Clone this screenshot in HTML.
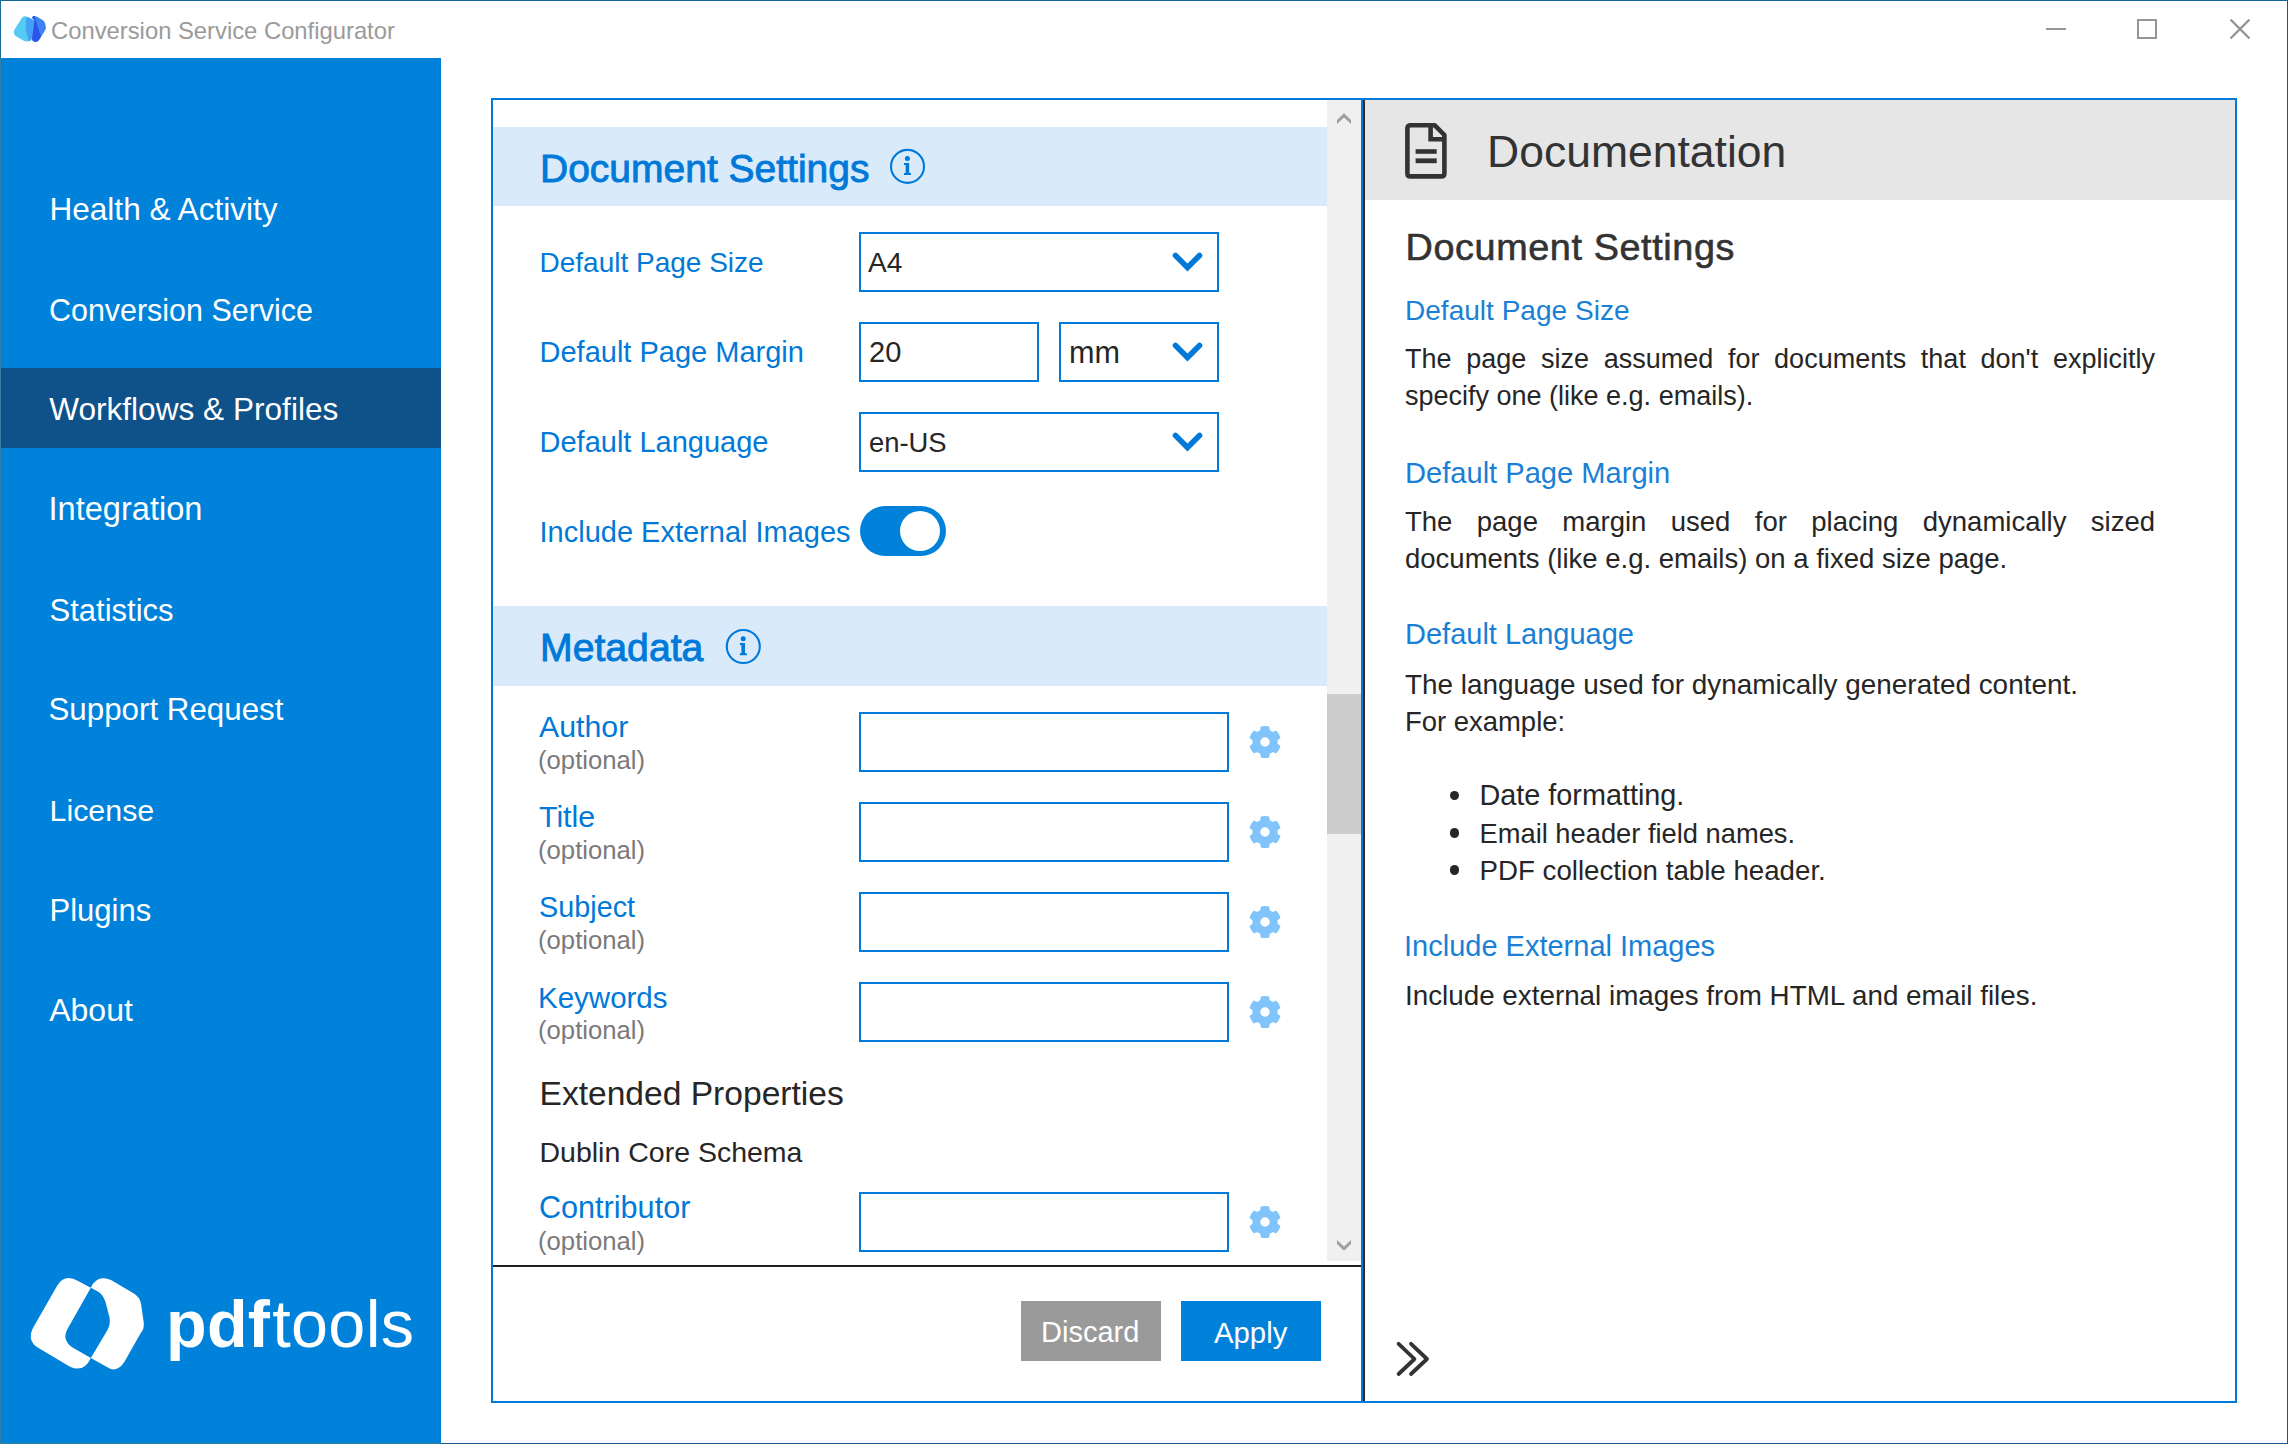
<!DOCTYPE html>
<html><head><meta charset="utf-8"><title>Conversion Service Configurator</title>
<style>
html,body{margin:0;padding:0;width:2288px;height:1444px;overflow:hidden;background:#fff;}
body{position:relative;font-family:"Liberation Sans", sans-serif;}
.a{position:absolute;}
.t{position:absolute;white-space:nowrap;line-height:1;font-family:"Liberation Sans", sans-serif;}
</style></head><body>
<svg class="a" style="left:12px;top:14px;" width="36" height="30" viewBox="0 0 36 30">
<path d="M9.98,3.82 Q11.60,1.30 14.33,2.55 L20.68,5.47 Q22.50,6.30 22.23,8.28 L20.07,23.82 Q19.80,25.80 17.98,26.63 L17.15,27.00 Q14.50,28.20 11.88,26.74 L5.22,23.06 Q2.60,21.60 1.90,19.55 L1.90,19.55 Q1.20,17.50 2.82,14.98 Z" fill="#56CBF2"/>
<path d="M14.41,3.60 Q14.50,2.60 15.41,3.02 L20.68,5.46 Q22.50,6.30 22.23,8.28 L20.07,23.82 Q19.80,25.80 18.15,26.65 L18.15,26.65 Q16.50,27.50 16.07,25.55 L13.72,14.98 Q13.50,14.00 13.59,13.00 Z" fill="#43A2F6"/>
<path d="M21.05,2.40 Q22.30,1.30 24.92,2.77 L30.18,5.73 Q32.80,7.20 33.37,10.15 L33.82,12.54 Q34.20,14.50 33.14,16.20 L27.88,24.65 Q26.30,27.20 24.45,27.70 L24.45,27.70 Q22.60,28.20 21.20,27.00 L20.56,26.45 Q19.80,25.80 19.94,24.81 L22.36,7.29 Q22.50,6.30 21.81,5.58 L20.49,4.22 Q19.80,3.50 20.55,2.84 Z" fill="#3E82F4"/>
<path d="M20.55,2.84 Q19.80,3.50 20.49,4.22 L21.81,5.58 Q22.50,6.30 22.36,7.29 L19.94,24.81 Q19.80,25.80 20.56,26.45 L21.20,27.00 Q22.60,28.20 24.45,27.70 L24.45,27.70 Q26.30,27.20 27.30,25.47 L28.50,23.37 Q29.00,22.50 28.68,21.55 L25.12,10.95 Q24.80,10.00 24.52,9.04 L22.58,2.26 Q22.30,1.30 21.55,1.96 Z" fill="#2A55E8"/>
</svg>
<div class="t" style="left:51px;top:19.45px;font-size:23.8px;color:#9A9A9A;">Conversion Service Configurator</div>
<div class="a" style="left:2046px;top:28px;width:20px;height:2px;background:#969696;"></div>
<div class="a" style="left:2137px;top:19px;width:20px;height:20px;border:2px solid #969696;box-sizing:border-box;"></div>
<svg class="a" style="left:2229px;top:18px;" width="22" height="22" viewBox="0 0 22 22"><path d="M1.6,1.6 L20.4,20.4 M20.4,1.6 L1.6,20.4" stroke="#969696" stroke-width="2.2"/></svg>
<div class="a" style="left:1px;top:58px;width:440px;height:1385px;background:#0082DB;"></div>
<div class="a" style="left:1px;top:368px;width:440px;height:80px;background:#0F5189;"></div>
<div class="t" style="left:49.4px;top:194.05px;font-size:31.6px;color:#FFFFFF;">Health &amp; Activity</div>
<div class="t" style="left:49px;top:295.02px;font-size:30.45px;color:#FFFFFF;">Conversion Service</div>
<div class="t" style="left:49.2px;top:394.05px;font-size:31.6px;color:#FFFFFF;">Workflows &amp; Profiles</div>
<div class="t" style="left:48.5px;top:493.20px;font-size:32.6px;color:#FFFFFF;">Integration</div>
<div class="t" style="left:49.5px;top:594.56px;font-size:31px;color:#FFFFFF;">Statistics</div>
<div class="t" style="left:48.5px;top:694.30px;font-size:31.3px;color:#FFFFFF;">Support Request</div>
<div class="t" style="left:49.5px;top:795.07px;font-size:30.4px;color:#FFFFFF;">License</div>
<div class="t" style="left:49.5px;top:894.56px;font-size:31px;color:#FFFFFF;">Plugins</div>
<div class="t" style="left:49.2px;top:993.71px;font-size:32px;color:#FFFFFF;">About</div>
<svg class="a" style="left:25px;top:1270px;" width="125" height="105" viewBox="0 0 125 105">
<path d="M32,16 Q39.2,3.4 53.1,10.9 L65.8,17.8 L42.9,58.2 Q36,70 48,77.8 L65.8,88 Q59,103 45,96.7 L13.1,77.8 Q1,70 8.7,56.7 Z" fill="#fff"/>
<path d="M65.8,17.8 Q72,4 86.5,10.2 L108.4,23.3 Q115,27 116,34 L118.5,50.9 Q120,58 115.6,63.3 L99.6,91.6 Q92,104 81.5,96.7 L65.8,88 L82.2,60.4 Q86,54 84.4,47 L80.5,32 Q78,24 72,21 Z" fill="#fff"/>
</svg>
<div class="t" style="left:166px;top:1290.71px;font-size:66.5px;color:#FFFFFF;letter-spacing:0.3px;"><b>pdf</b><span style="margin-left:2px">tools</span></div>
<div class="a" style="left:491px;top:98px;width:872px;height:1305px;border:2px solid #0079D8;box-sizing:border-box;"></div>
<div class="a" style="left:493px;top:127px;width:834px;height:79px;background:#D9EBFB;"></div>
<div class="a" style="left:493px;top:606px;width:834px;height:80px;background:#D9EBFB;"></div>
<div class="a" style="left:1327px;top:100px;width:34px;height:1161px;background:#F0F0F0;"></div>
<div class="a" style="left:1327px;top:694px;width:34px;height:140px;background:#CDCDCD;"></div>
<svg class="a" style="left:1336px;top:111px;" width="16" height="15" viewBox="0 0 16 15"><path d="M1,9 L8,2.3 L15,9 L15,13 L8,6.4 L1,13 Z" fill="#A0A0A0"/></svg>
<svg class="a" style="left:1336px;top:1238px;" width="16" height="15" viewBox="0 0 16 15"><path d="M1,2 L8,8.6 L15,2 L15,6 L8,12.8 L1,6 Z" fill="#A0A0A0"/></svg>
<div class="a" style="left:493px;top:1265px;width:868px;height:2px;background:#1E1E1E;"></div>
<div class="a" style="left:1363px;top:98px;width:2px;height:1305px;background:#2A2A2A;"></div>
<div class="t" style="left:540px;top:149.19px;font-size:39px;color:#0079D8;-webkit-text-stroke:0.9px #0079D8;">Document Settings</div>
<svg class="a" style="left:888px;top:147px;" width="38" height="38" viewBox="0 0 38 38">
<circle cx="19.50" cy="19.40" r="16.5" fill="none" stroke="#0079D8" stroke-width="2.1"/>
<circle cx="19.40" cy="11.60" r="2.5" fill="#0079D8"/>
<path transform="translate(0.50,0.40)" d="M15.5,15.5 H20.7 V25.7 H22.5 V27.7 H15.5 V25.7 H17.1 V17.5 H15.5 Z" fill="#0079D8"/>
</svg>
<div class="t" style="left:540px;top:628.42px;font-size:39.2px;color:#0079D8;-webkit-text-stroke:0.9px #0079D8;">Metadata</div>
<svg class="a" style="left:724px;top:627px;" width="38" height="38" viewBox="0 0 38 38">
<circle cx="19.30" cy="19.50" r="16.5" fill="none" stroke="#0079D8" stroke-width="2.1"/>
<circle cx="19.20" cy="11.70" r="2.5" fill="#0079D8"/>
<path transform="translate(0.30,0.50)" d="M15.5,15.5 H20.7 V25.7 H22.5 V27.7 H15.5 V25.7 H17.1 V17.5 H15.5 Z" fill="#0079D8"/>
</svg>
<div class="t" style="left:539.5px;top:248.60px;font-size:28px;color:#0079D8;">Default Page Size</div>
<div class="t" style="left:539.5px;top:338.25px;font-size:29px;color:#0079D8;">Default Page Margin</div>
<div class="t" style="left:539.5px;top:427.75px;font-size:29px;color:#0079D8;">Default Language</div>
<div class="t" style="left:539.5px;top:518.25px;font-size:29px;color:#0079D8;">Include External Images</div>
<div class="a" style="left:859px;top:232px;width:360px;height:60px;background:#fff;border:2px solid #0079D8;box-sizing:border-box;"></div>
<svg class="a" style="left:1170.5px;top:250px;" width="34" height="24" viewBox="0 0 34 24"><path d="M4.5,5.5 L16.5,17.5 L28.5,5.5" fill="none" stroke="#0079D8" stroke-width="5.6" stroke-linecap="round" stroke-linejoin="miter"/></svg>
<div class="t" style="left:868px;top:248.60px;font-size:28px;color:#262626;">A4</div>
<div class="a" style="left:859px;top:322px;width:180px;height:60px;background:#fff;border:2px solid #0079D8;box-sizing:border-box;"></div>
<div class="t" style="left:869px;top:338.25px;font-size:29px;color:#262626;">20</div>
<div class="a" style="left:1059px;top:322px;width:160px;height:60px;background:#fff;border:2px solid #0079D8;box-sizing:border-box;"></div>
<svg class="a" style="left:1170.5px;top:340px;" width="34" height="24" viewBox="0 0 34 24"><path d="M4.5,5.5 L16.5,17.5 L28.5,5.5" fill="none" stroke="#0079D8" stroke-width="5.6" stroke-linecap="round" stroke-linejoin="miter"/></svg>
<div class="t" style="left:1069px;top:336.90px;font-size:30.6px;color:#262626;">mm</div>
<div class="a" style="left:859px;top:412px;width:360px;height:60px;background:#fff;border:2px solid #0079D8;box-sizing:border-box;"></div>
<svg class="a" style="left:1170.5px;top:430px;" width="34" height="24" viewBox="0 0 34 24"><path d="M4.5,5.5 L16.5,17.5 L28.5,5.5" fill="none" stroke="#0079D8" stroke-width="5.6" stroke-linecap="round" stroke-linejoin="miter"/></svg>
<div class="t" style="left:869px;top:429.11px;font-size:27.4px;color:#262626;">en-US</div>
<div class="a" style="left:860px;top:506px;width:86px;height:50px;background:#0082DB;border-radius:25px;"></div>
<div class="a" style="left:900px;top:511px;width:40px;height:40px;background:#fff;border-radius:50%;"></div>
<div class="t" style="left:539px;top:711.85px;font-size:30.3px;color:#0079D8;">Author</div>
<div class="t" style="left:538px;top:748.04px;font-size:25.7px;color:#7A7A7A;">(optional)</div>
<div class="a" style="left:859px;top:712px;width:370px;height:60px;background:#fff;border:2px solid #0079D8;box-sizing:border-box;"></div>
<svg class="a" style="left:1247.4px;top:724px;" width="36" height="36" viewBox="0 0 36 36"><path d="M22.72,6.32 L22.28,2.58 A16.0,16.0 0 0,0 13.72,2.58 L13.28,6.32 A12.6,12.6 0 0,0 10.24,8.07 L6.79,6.59 A16.0,16.0 0 0,0 2.51,13.99 L5.52,16.25 A12.6,12.6 0 0,0 5.52,19.75 L2.51,22.01 A16.0,16.0 0 0,0 6.79,29.41 L10.24,27.93 A12.6,12.6 0 0,0 13.28,29.68 L13.72,33.42 A16.0,16.0 0 0,0 22.28,33.42 L22.72,29.68 A12.6,12.6 0 0,0 25.76,27.93 L29.21,29.41 A16.0,16.0 0 0,0 33.49,22.01 L30.48,19.75 A12.6,12.6 0 0,0 30.48,16.25 L33.49,13.99 A16.0,16.0 0 0,0 29.21,6.59 L25.76,8.07 A12.6,12.6 0 0,0 22.72,6.32 Z M18,13.25 A4.75,4.75 0 1,0 18,22.75 A4.75,4.75 0 1,0 18,13.25 Z" fill="#80C4FB" fill-rule="evenodd"/></svg>
<div class="t" style="left:539px;top:801.85px;font-size:30.3px;color:#0079D8;">Title</div>
<div class="t" style="left:538px;top:838.04px;font-size:25.7px;color:#7A7A7A;">(optional)</div>
<div class="a" style="left:859px;top:802px;width:370px;height:60px;background:#fff;border:2px solid #0079D8;box-sizing:border-box;"></div>
<svg class="a" style="left:1247.4px;top:814px;" width="36" height="36" viewBox="0 0 36 36"><path d="M22.72,6.32 L22.28,2.58 A16.0,16.0 0 0,0 13.72,2.58 L13.28,6.32 A12.6,12.6 0 0,0 10.24,8.07 L6.79,6.59 A16.0,16.0 0 0,0 2.51,13.99 L5.52,16.25 A12.6,12.6 0 0,0 5.52,19.75 L2.51,22.01 A16.0,16.0 0 0,0 6.79,29.41 L10.24,27.93 A12.6,12.6 0 0,0 13.28,29.68 L13.72,33.42 A16.0,16.0 0 0,0 22.28,33.42 L22.72,29.68 A12.6,12.6 0 0,0 25.76,27.93 L29.21,29.41 A16.0,16.0 0 0,0 33.49,22.01 L30.48,19.75 A12.6,12.6 0 0,0 30.48,16.25 L33.49,13.99 A16.0,16.0 0 0,0 29.21,6.59 L25.76,8.07 A12.6,12.6 0 0,0 22.72,6.32 Z M18,13.25 A4.75,4.75 0 1,0 18,22.75 A4.75,4.75 0 1,0 18,13.25 Z" fill="#80C4FB" fill-rule="evenodd"/></svg>
<div class="t" style="left:539px;top:893.12px;font-size:28.8px;color:#0079D8;">Subject</div>
<div class="t" style="left:538px;top:928.04px;font-size:25.7px;color:#7A7A7A;">(optional)</div>
<div class="a" style="left:859px;top:892px;width:370px;height:60px;background:#fff;border:2px solid #0079D8;box-sizing:border-box;"></div>
<svg class="a" style="left:1247.4px;top:904px;" width="36" height="36" viewBox="0 0 36 36"><path d="M22.72,6.32 L22.28,2.58 A16.0,16.0 0 0,0 13.72,2.58 L13.28,6.32 A12.6,12.6 0 0,0 10.24,8.07 L6.79,6.59 A16.0,16.0 0 0,0 2.51,13.99 L5.52,16.25 A12.6,12.6 0 0,0 5.52,19.75 L2.51,22.01 A16.0,16.0 0 0,0 6.79,29.41 L10.24,27.93 A12.6,12.6 0 0,0 13.28,29.68 L13.72,33.42 A16.0,16.0 0 0,0 22.28,33.42 L22.72,29.68 A12.6,12.6 0 0,0 25.76,27.93 L29.21,29.41 A16.0,16.0 0 0,0 33.49,22.01 L30.48,19.75 A12.6,12.6 0 0,0 30.48,16.25 L33.49,13.99 A16.0,16.0 0 0,0 29.21,6.59 L25.76,8.07 A12.6,12.6 0 0,0 22.72,6.32 Z M18,13.25 A4.75,4.75 0 1,0 18,22.75 A4.75,4.75 0 1,0 18,13.25 Z" fill="#80C4FB" fill-rule="evenodd"/></svg>
<div class="t" style="left:538px;top:982.53px;font-size:29.5px;color:#0079D8;">Keywords</div>
<div class="t" style="left:538px;top:1018.04px;font-size:25.7px;color:#7A7A7A;">(optional)</div>
<div class="a" style="left:859px;top:982px;width:370px;height:60px;background:#fff;border:2px solid #0079D8;box-sizing:border-box;"></div>
<svg class="a" style="left:1247.4px;top:994px;" width="36" height="36" viewBox="0 0 36 36"><path d="M22.72,6.32 L22.28,2.58 A16.0,16.0 0 0,0 13.72,2.58 L13.28,6.32 A12.6,12.6 0 0,0 10.24,8.07 L6.79,6.59 A16.0,16.0 0 0,0 2.51,13.99 L5.52,16.25 A12.6,12.6 0 0,0 5.52,19.75 L2.51,22.01 A16.0,16.0 0 0,0 6.79,29.41 L10.24,27.93 A12.6,12.6 0 0,0 13.28,29.68 L13.72,33.42 A16.0,16.0 0 0,0 22.28,33.42 L22.72,29.68 A12.6,12.6 0 0,0 25.76,27.93 L29.21,29.41 A16.0,16.0 0 0,0 33.49,22.01 L30.48,19.75 A12.6,12.6 0 0,0 30.48,16.25 L33.49,13.99 A16.0,16.0 0 0,0 29.21,6.59 L25.76,8.07 A12.6,12.6 0 0,0 22.72,6.32 Z M18,13.25 A4.75,4.75 0 1,0 18,22.75 A4.75,4.75 0 1,0 18,13.25 Z" fill="#80C4FB" fill-rule="evenodd"/></svg>
<div class="t" style="left:539.5px;top:1076.96px;font-size:33.6px;color:#262626;">Extended Properties</div>
<div class="t" style="left:539.5px;top:1138.27px;font-size:28.5px;color:#262626;">Dublin Core Schema</div>
<div class="t" style="left:539px;top:1192.00px;font-size:30.6px;color:#0079D8;">Contributor</div>
<div class="t" style="left:538px;top:1228.54px;font-size:25.7px;color:#7A7A7A;">(optional)</div>
<div class="a" style="left:859px;top:1192px;width:370px;height:60px;background:#fff;border:2px solid #0079D8;box-sizing:border-box;"></div>
<svg class="a" style="left:1247.4px;top:1204px;" width="36" height="36" viewBox="0 0 36 36"><path d="M22.72,6.32 L22.28,2.58 A16.0,16.0 0 0,0 13.72,2.58 L13.28,6.32 A12.6,12.6 0 0,0 10.24,8.07 L6.79,6.59 A16.0,16.0 0 0,0 2.51,13.99 L5.52,16.25 A12.6,12.6 0 0,0 5.52,19.75 L2.51,22.01 A16.0,16.0 0 0,0 6.79,29.41 L10.24,27.93 A12.6,12.6 0 0,0 13.28,29.68 L13.72,33.42 A16.0,16.0 0 0,0 22.28,33.42 L22.72,29.68 A12.6,12.6 0 0,0 25.76,27.93 L29.21,29.41 A16.0,16.0 0 0,0 33.49,22.01 L30.48,19.75 A12.6,12.6 0 0,0 30.48,16.25 L33.49,13.99 A16.0,16.0 0 0,0 29.21,6.59 L25.76,8.07 A12.6,12.6 0 0,0 22.72,6.32 Z M18,13.25 A4.75,4.75 0 1,0 18,22.75 A4.75,4.75 0 1,0 18,13.25 Z" fill="#80C4FB" fill-rule="evenodd"/></svg>
<div class="a" style="left:1021px;top:1301px;width:140px;height:60px;background:#9A9A9A;"></div>
<div class="t" style="left:1041px;top:1318.25px;font-size:29px;color:#FFFFFF;">Discard</div>
<div class="a" style="left:1181px;top:1301px;width:140px;height:60px;background:#0082DB;"></div>
<div class="t" style="left:1214px;top:1318.00px;font-size:29.3px;color:#FFFFFF;">Apply</div>
<div class="a" style="left:1363px;top:98px;width:874px;height:2px;background:#0079D8;"></div>
<div class="a" style="left:2235px;top:98px;width:2px;height:1305px;background:#0079D8;"></div>
<div class="a" style="left:1363px;top:1401px;width:874px;height:2px;background:#0079D8;"></div>
<div class="a" style="left:1365px;top:100px;width:870px;height:100px;background:#E6E6E6;"></div>
<svg class="a" style="left:1405px;top:123px;" width="42" height="56" viewBox="0 0 42 56">
<path d="M5.6,2.3 H29.8 L39.4,12 V50.2 Q39.4,53.4 36.2,53.4 H5.6 Q2.4,53.4 2.4,50.2 V5.5 Q2.4,2.3 5.6,2.3 Z" fill="none" stroke="#333" stroke-width="4.6" stroke-linejoin="round"/>
<path d="M25.6,2.3 V16.2 H39.4" fill="none" stroke="#333" stroke-width="4.6"/>
<rect x="10.6" y="26.2" width="21.1" height="4.6" fill="#333"/>
<rect x="10.6" y="35.4" width="21.1" height="4.8" fill="#333"/>
</svg>
<div class="t" style="left:1487px;top:129.63px;font-size:44.5px;color:#333333;">Documentation</div>
<div class="t" style="left:1405.5px;top:229.00px;font-size:37.8px;color:#333333;letter-spacing:0.6px;-webkit-text-stroke:0.6px #333;">Document Settings</div>
<div class="t" style="left:1405px;top:297.06px;font-size:28.05px;color:#1A7FD6;">Default Page Size</div>
<div class="t" style="left:1405px;top:345.64px;font-size:27.0px;color:#262626;width:750px;text-align:justify;text-align-last:justify;white-space:normal;">The page size assumed for documents that don't explicitly</div>
<div class="t" style="left:1405px;top:383.24px;font-size:27.0px;color:#262626;">specify one (like e.g. emails).</div>
<div class="t" style="left:1405px;top:458.87px;font-size:29.1px;color:#1A7FD6;">Default Page Margin</div>
<div class="t" style="left:1405px;top:508.32px;font-size:27.5px;color:#262626;width:750px;text-align:justify;text-align-last:justify;white-space:normal;">The page margin used for placing dynamically sized</div>
<div class="t" style="left:1405px;top:545.32px;font-size:27.5px;color:#262626;">documents (like e.g. emails) on a fixed size page.</div>
<div class="t" style="left:1405px;top:620.25px;font-size:29px;color:#1A7FD6;">Default Language</div>
<div class="t" style="left:1405px;top:670.78px;font-size:27.9px;color:#262626;">The language used for dynamically generated content.</div>
<div class="t" style="left:1405px;top:708.36px;font-size:27.45px;color:#262626;">For example:</div>
<div class="a" style="left:1449.6000000000001px;top:790.7px;width:9.6px;height:9.6px;border-radius:50%;background:#262626;"></div>
<div class="t" style="left:1479.5px;top:781.22px;font-size:28.8px;color:#262626;">Date formatting.</div>
<div class="a" style="left:1449.6000000000001px;top:828.0px;width:9.6px;height:9.6px;border-radius:50%;background:#262626;"></div>
<div class="t" style="left:1479.5px;top:820.39px;font-size:27.3px;color:#262626;">Email header field names.</div>
<div class="a" style="left:1449.6000000000001px;top:865.3000000000001px;width:9.6px;height:9.6px;border-radius:50%;background:#262626;"></div>
<div class="t" style="left:1479.5px;top:856.75px;font-size:27.7px;color:#262626;">PDF collection table header.</div>
<div class="t" style="left:1404px;top:932.45px;font-size:29px;color:#1A7FD6;">Include External Images</div>
<div class="t" style="left:1405px;top:981.67px;font-size:27.8px;color:#262626;">Include external images from HTML and email files.</div>
<svg class="a" style="left:1394px;top:1338px;" width="40" height="40" viewBox="0 0 40 40"><path d="M4.6,5.8 L20.5,21 L4.6,36 M17,5.8 L33,21 L17,36" fill="none" stroke="#333" stroke-width="3.8" stroke-linecap="round" stroke-linejoin="round"/></svg>
<div class="a" style="left:0px;top:0px;width:2288px;height:1px;background:#156698;"></div>
<div class="a" style="left:0px;top:0px;width:1px;height:58px;background:#156A9A;"></div>
<div class="a" style="left:0px;top:58px;width:1px;height:1386px;background:#2F80A2;"></div>
<div class="a" style="left:2287px;top:0px;width:1px;height:1444px;background:#1F5690;"></div>
<div class="a" style="left:441px;top:1443px;width:1847px;height:1px;background:#1F5690;"></div>
<div class="a" style="left:0px;top:1443px;width:441px;height:1px;background:#2F80A2;"></div>
</body></html>
